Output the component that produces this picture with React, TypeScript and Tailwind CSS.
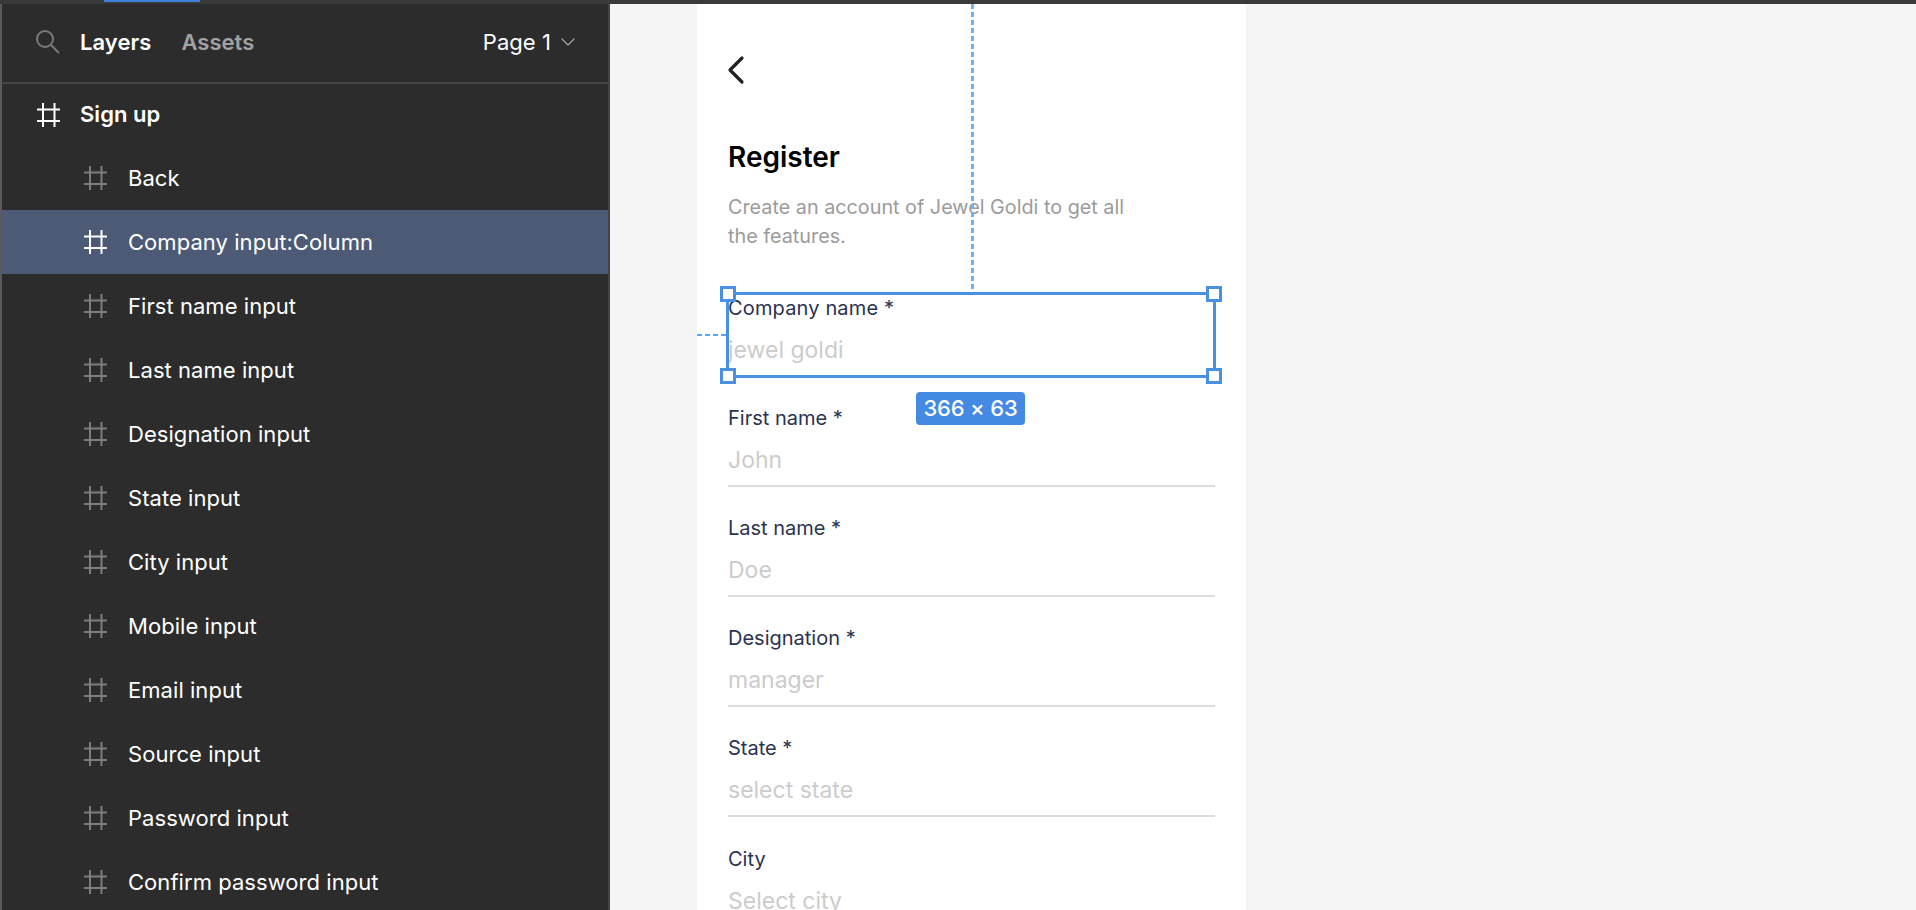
import { ChevronDown, ChevronLeft } from "lucide-react";

const layers = [
  "Back",
  "Company input:Column",
  "First name input",
  "Last name input",
  "Designation input",
  "State input",
  "City input",
  "Mobile input",
  "Email input",
  "Source input",
  "Password input",
  "Confirm password input",
];

const fields = [
  { label: "First name *", hint: "John" },
  { label: "Last name *", hint: "Doe" },
  { label: "Designation *", hint: "manager" },
  { label: "State *", hint: "select state" },
];

function FrameIcon({ className }: { className: string }) {
  return (
    <svg viewBox="0 0 23 24" className={`h-[24px] w-[23px] shrink-0 ${className}`} fill="none" stroke="currentColor" strokeWidth="2">
      <path d="M6 0V24M17.5 0V24M0 6.5H23M0 18H23" />
    </svg>
  );
}

function Handle({ className }: { className: string }) {
  return <div className={`absolute h-[16px] w-[16px] border-[3px] border-[#4a90e2] bg-white ${className}`} />;
}

export default function App() {
  return (
    <div className="flex h-[910px] w-full flex-col overflow-hidden bg-[#f5f5f5] font-['Inter',sans-serif]">
      <div className="h-[4px] shrink-0 bg-[#3a3a3a]">
        <div className="ml-[104px] h-[2px] w-[96px] bg-[#3f83d8]" />
      </div>
      <div className="flex min-h-0 flex-1">
        <aside className="w-[610px] shrink-0 border-x-2 border-l-[#5a5a5a] border-r-[#444444] bg-[#2c2c2c] tracking-[0.05px] text-white">
          <div className="flex h-[80px] items-center border-b-2 border-[#444444] pb-[2px] pl-[34px] pr-[28px] text-[22px]">
            <svg viewBox="0 0 24 24" className="h-[24px] w-[24px] text-[#7a7a7a]" fill="none" stroke="currentColor" strokeWidth="2">
              <circle cx="9" cy="9" r="8" />
              <path d="M15 15L23 23" />
            </svg>
            <span className="ml-[20px] font-semibold">Layers</span>
            <span className="ml-[30px] font-semibold text-[#a3a3a3]">Assets</span>
            <span className="ml-auto">Page 1</span>
            <ChevronDown className="ml-[5px] h-[24px] w-[24px] text-[#a3a3a3]" strokeWidth={1.2} />
          </div>
          <div className="flex h-[62px] items-center pl-[35px] text-[22px] font-semibold">
            <FrameIcon className="text-white" />
            <span className="ml-[20px] pb-[2px]">Sign up</span>
          </div>
          {layers.map((name, i) => (
            <div key={name} className={`flex h-[64px] items-center pl-[82px] text-[22px] ${i === 1 ? "bg-[#4d5a75]" : ""}`}>
              <FrameIcon className={i === 1 ? "text-white" : "text-[#7d7d7d]"} />
              <span className="ml-[21px]">{name}</span>
            </div>
          ))}
        </aside>
        <main className="ml-[87px] w-[549px] bg-white pl-[31px] pr-[31px]">
          <div className="relative pt-[42px]">
            <ChevronLeft className="-ml-[16px] h-[48px] w-[48px] text-[#222222]" strokeWidth={1.6} />
            <h1 className="mt-[45px] text-[28px] leading-[36px] font-semibold text-black">Register</h1>
            <p className="mt-[18px] w-[420px] text-[19.8px] leading-[29px] text-[#9b9b9b]">
              Create an account of Jewel Goldi to get all the features.
            </p>
            <div className="mt-[40px] h-[86px] pt-[3px]">
              <div className="text-[20px] leading-[28px] tracking-[0.15px] text-[#2a3350]">Company name *</div>
              <div className="mt-[14px] text-[23px] leading-[28px] text-[#cccccc]">jewel goldi</div>
            </div>
            {fields.map((f) => (
              <div key={f.label} className="h-[110px] border-b-2 border-[#dcdcdc] pt-[27px]">
                <div className="text-[20px] leading-[28px] text-[#2a3350]">{f.label}</div>
                <div className="mt-[14px] text-[23px] leading-[28px] text-[#cccccc]">{f.hint}</div>
              </div>
            ))}
            <div className="pt-[28px]">
              <div className="text-[20px] leading-[28px] text-[#2a3350]">City</div>
              <div className="mt-[14px] text-[23px] leading-[28px] text-[#cccccc]">Select city</div>
            </div>

            <div className="absolute top-0 left-[243px] h-[285px] w-[3px] bg-[repeating-linear-gradient(to_bottom,#6db1f7_0,#6db1f7_5px,transparent_5px,transparent_8px)]" />
            <div className="absolute top-[330px] -left-[31px] h-[2px] w-[29px] bg-[repeating-linear-gradient(to_right,#5aa5f5_0,#5aa5f5_5px,transparent_5px,transparent_8px)]" />
            <div className="absolute top-[288px] -left-[2px] h-[86px] w-[490px] border-[3px] border-[#4a90e2]">
              <Handle className="-top-[9px] -left-[9px]" />
              <Handle className="-top-[9px] -right-[9px]" />
              <Handle className="-bottom-[9px] -left-[9px]" />
              <Handle className="-right-[9px] -bottom-[9px]" />
            </div>
            <div className="absolute top-[388px] left-[188px] flex h-[33px] w-[109px] items-center justify-center rounded-[4px] bg-[#4489e4] text-[22px] font-medium tracking-[-0.2px] text-white">
              366 × 63
            </div>
          </div>
        </main>
      </div>
    </div>
  );
}
